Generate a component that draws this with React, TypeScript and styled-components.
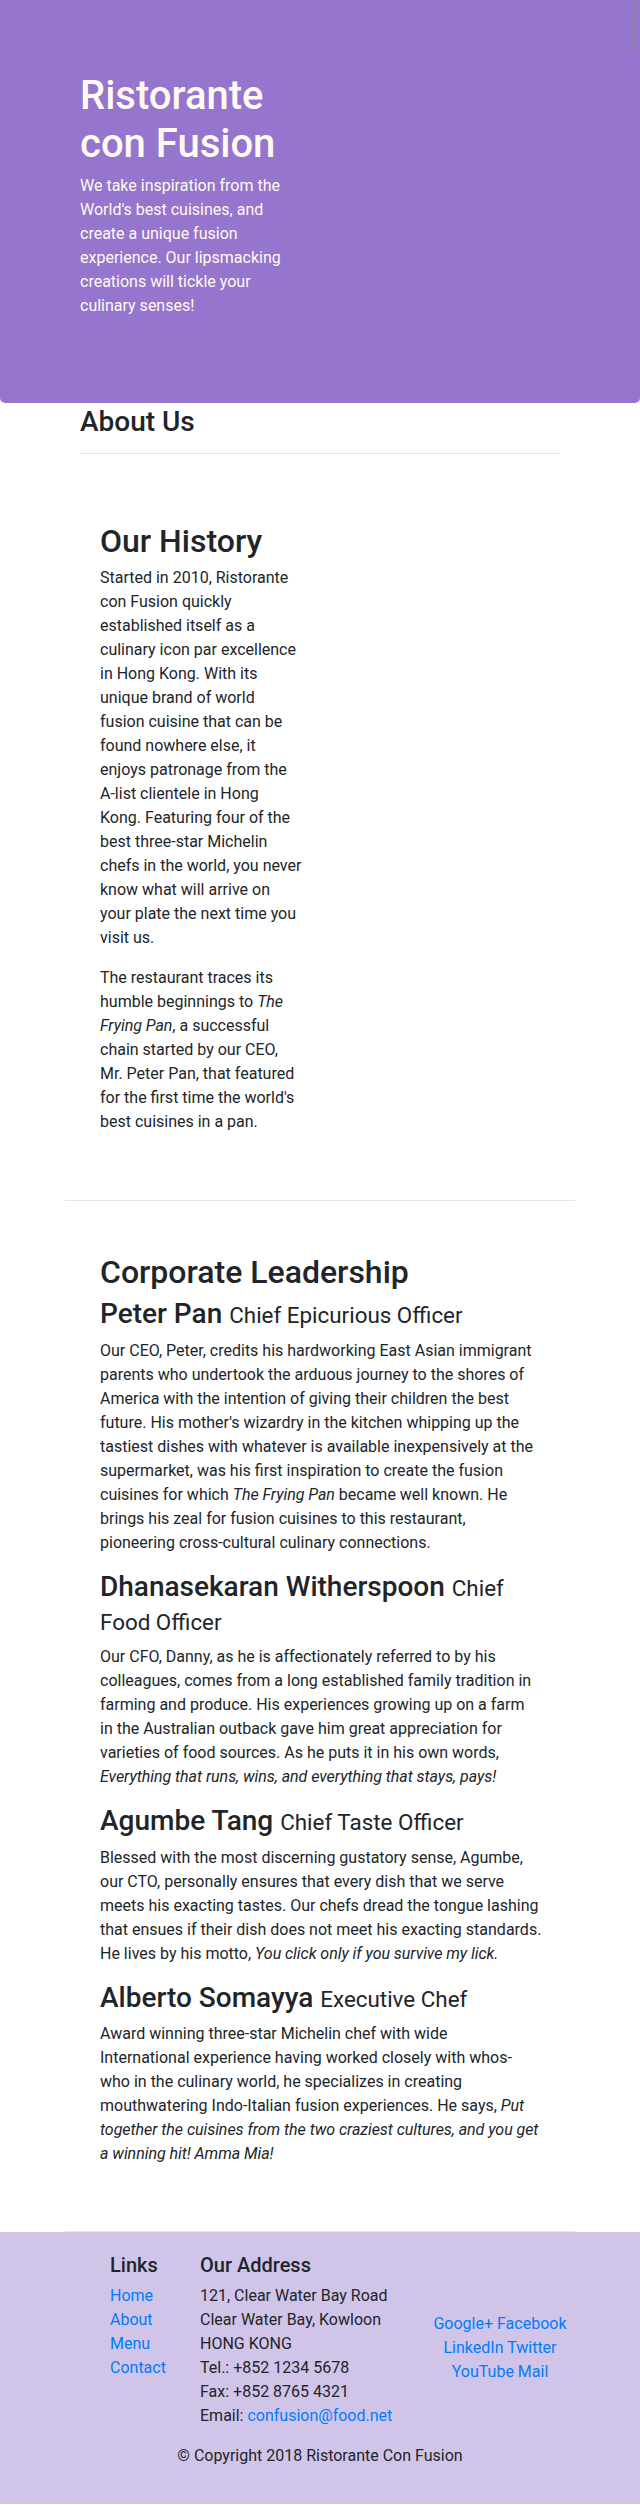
import React from "react";
import styled, { createGlobalStyle } from "styled-components";

const GlobalStyle = createGlobalStyle`
  html, body { margin: 0; padding: 0; }
  body {
    font-family: Roboto, "Liberation Sans", Arial, sans-serif;
    font-size: 16px;
    line-height: 24px;
    color: #212529;
    background: #fff;
  }
  em { letter-spacing: -0.05px; }
  *, *::before, *::after { box-sizing: border-box; }
`;

const Page = styled.div`
  position: relative;
  width: 640px;
`;

const ScrollThumb = styled.div`
  position: absolute;
  top: 4px;
  right: 4px;
  width: 3px;
  height: 49px;
  border-radius: 2px;
  background: #8b86a2;
`;

const Jumbotron = styled.header`
  background: #9575cd;
  color: #fffaf0;
  border-radius: 0 0 5px 5px;
  padding: 70px 80px 85px;
`;

const Title = styled.h1`
  margin: 0 0 6px;
  padding-top: 2px;
  width: 215px;
  font-size: 40px;
  line-height: 1.2;
  font-weight: 500;
`;

const Lead = styled.p`
  margin: 0;
  width: 215px;
`;

const AboutHeader = styled.div`
  padding: 0 80px;
`;

const PageTitle = styled.h3`
  margin: 0;
  padding-top: 2px;
  font-size: 28px;
  line-height: 1.2;
  font-weight: 500;
`;

const Divider = styled.hr`
  height: 0;
  border: 0;
  border-top: 1px solid rgba(0, 0, 0, 0.1);
  margin: 14px 0 16px;
`;

const Section = styled.section`
  margin: 0 65px;
  padding: 50px 35px;
  border-bottom: 1px solid #e6e6e6;
`;

const Column = styled.div<{ $width: number }>`
  width: ${(p) => p.$width}px;
`;

const SectionTitle = styled.h2`
  margin: 0 0 6px;
  padding-top: 2px;
  font-size: 32px;
  line-height: 1.2;
  font-weight: 500;
`;

const Paragraph = styled.p`
  margin: 0 0 16px;
`;

const LeaderList = styled.ul`
  list-style: none;
  margin: 0;
  padding: 0;
`;

const Leader = styled.li`
  display: block;
`;

const LeaderName = styled.h3`
  margin: 0 0 8px;
  font-size: 28px;
  line-height: 1.2;
  font-weight: 500;
`;

const Designation = styled.small`
  font-size: 80%;
  font-weight: 400;
`;

const LeaderText = styled.p<{ $measure: number }>`
  margin: 0 0 15px;
  width: ${(p) => p.$measure}px;
`;

const Footer = styled.footer`
  background: #d1c4e9;
  padding: 20px 0;
`;

const FooterRow = styled.div`
  display: flex;
  padding-left: 95px;
`;

const FooterCol = styled.div<{ $width: number; $center?: boolean }>`
  width: ${(p) => p.$width}px;
  padding: 0 15px;
  ${(p) => (p.$center ? "align-self: center; text-align: center;" : "")}
`;

const FooterHeading = styled.h5`
  margin: 0 0 7px;
  padding-top: 1px;
  font-size: 20px;
  line-height: 1.2;
  font-weight: 500;
`;

const LinkList = styled.ul`
  list-style: none;
  margin: 0 0 16px;
  padding: 0;
`;

const Link = styled.a`
  color: #007bff;
  text-decoration: none;
`;

const Address = styled.address`
  font-style: normal;
  margin: 0 0 16px;
`;

const Copyright = styled.p`
  margin: 0 0 16px;
  text-align: center;
`;

const leaders = [
  {
    name: "Peter Pan",
    title: "Chief Epicurious Officer",
    measure: 439,
    body: (
      <>
        Our CEO, Peter, credits his hardworking East Asian immigrant parents who undertook the
        arduous journey to the shores of America with the intention of giving their children the
        best future. His mother's wizardry in the kitchen whipping up the tastiest dishes with
        whatever is available inexpensively at the supermarket, was his first inspiration to create
        the fusion cuisines for which <em>The Frying Pan</em> became well known. He brings his zeal
        for fusion cuisines to this restaurant, pioneering cross-cultural culinary connections.
      </>
    ),
  },
  {
    name: "Dhanasekaran Witherspoon",
    title: "Chief Food Officer",
    measure: 436,
    body: (
      <>
        Our CFO, Danny, as he is affectionately referred to by his colleagues, comes from a long
        established family tradition in farming and produce. His experiences growing up on a farm
        in the Australian outback gave him great appreciation for varieties of food sources. As he
        puts it in his own words,{" "}
        <em>Everything that runs, wins, and everything that stays, pays!</em>
      </>
    ),
  },
  {
    name: "Agumbe Tang",
    title: "Chief Taste Officer",
    measure: 446,
    body: (
      <>
        Blessed with the most discerning gustatory sense, Agumbe, our CTO, personally ensures that
        every dish that we serve meets his exacting tastes. Our chefs dread the tongue lashing that
        ensues if their dish does not meet his exacting standards. He lives by his motto,{" "}
        <em>You click only if you survive my lick.</em>
      </>
    ),
  },
  {
    name: "Alberto Somayya",
    title: "Executive Chef",
    measure: 439.6,
    body: (
      <>
        Award winning three-star Michelin chef with wide International experience having worked
        closely with whos-who in the culinary world, he specializes in creating mouthwatering
        Indo-Italian fusion experiences. He says,{" "}
        <em>
          Put together the cuisines from the two craziest cultures, and you get a winning hit! Amma
          Mia!
        </em>
      </>
    ),
  },
];

export default function App() {
  return (
    <Page>
      <GlobalStyle />
      <ScrollThumb />
      <Jumbotron>
        <Title>Ristorante con Fusion</Title>
        <Lead>
          We take inspiration from the World's best cuisines, and create a unique fusion
          experience. Our lipsmacking creations will tickle your culinary senses!
        </Lead>
      </Jumbotron>

      <AboutHeader>
        <PageTitle>About Us</PageTitle>
        <Divider />
      </AboutHeader>

      <Section>
        <Column $width={202.2}>
          <SectionTitle>Our History</SectionTitle>
          <Paragraph>
            Started in 2010, Ristorante con Fusion quickly established itself as a culinary icon
            par excellence in Hong Kong. With its unique brand of world fusion cuisine that can be
            found nowhere else, it enjoys patronage from the A-list clientele in Hong Kong.
            Featuring four of the best three-star Michelin chefs in the world, you never know what
            will arrive on your plate the next time you visit us.
          </Paragraph>
          <Paragraph>
            The restaurant traces its humble beginnings to <em>The Frying Pan</em>, a successful
            chain started by our CEO, Mr. Peter Pan, that featured for the first time the world's
            best cuisines in a pan.
          </Paragraph>
        </Column>
      </Section>

      <Section>
        <SectionTitle>Corporate Leadership</SectionTitle>
        <LeaderList>
          {leaders.map((l) => (
            <Leader key={l.name}>
              <LeaderName>
                {l.name} <Designation>{l.title}</Designation>
              </LeaderName>
              <LeaderText $measure={l.measure}>{l.body}</LeaderText>
            </Leader>
          ))}
        </LeaderList>
      </Section>

      <Footer>
        <FooterRow>
          <FooterCol $width={90}>
            <FooterHeading>Links</FooterHeading>
            <LinkList>
              <li>
                <Link href="#">Home</Link>
              </li>
              <li>
                <Link href="#">About</Link>
              </li>
              <li>
                <Link href="#">Menu</Link>
              </li>
              <li>
                <Link href="#">Contact</Link>
              </li>
            </LinkList>
          </FooterCol>
          <FooterCol $width={225}>
            <FooterHeading>Our Address</FooterHeading>
            <Address>
              121, Clear Water Bay Road
              <br />
              Clear Water Bay, Kowloon
              <br />
              HONG KONG
              <br />
              Tel.: +852 1234 5678
              <br />
              Fax: +852 8765 4321
              <br />
              Email: <Link href="#">confusion@food.net</Link>
            </Address>
          </FooterCol>
          <FooterCol $width={180} $center>
            <Link href="#">Google+</Link> <Link href="#">Facebook</Link>{" "}
            <Link href="#">LinkedIn</Link> <Link href="#">Twitter</Link>{" "}
            <Link href="#">YouTube</Link> <Link href="#">Mail</Link>
          </FooterCol>
        </FooterRow>
        <Copyright>© Copyright 2018 Ristorante Con Fusion</Copyright>
      </Footer>
    </Page>
  );
}
